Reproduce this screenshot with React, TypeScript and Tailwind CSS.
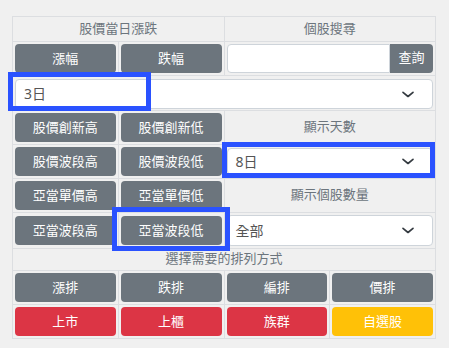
import React from 'react';

const font = { fontFamily: '"Noto Sans", "Noto Sans CJK TC", sans-serif' };

const Btn: React.FC<{ label: string; color?: string }> = ({ label, color = 'bg-[#6c757d]' }) => (
  <button className={`w-full h-[29px] rounded-[4px] ${color} text-white text-[13px] leading-[29px]`}>
    {label}
  </button>
);

const Chevron = () => (
  <svg width="14" height="10" viewBox="0 0 16 12" className="shrink-0">
    <path d="M2 4l6 5 6-5" fill="none" stroke="#343a40" strokeWidth="2" strokeLinecap="round" strokeLinejoin="round" />
  </svg>
);

const Select: React.FC<{ value: string; h?: string }> = ({ value, h = 'h-[31px]' }) => (
  <div className={`flex items-center justify-between ${h} bg-white border border-[#ced4da] rounded-[4px] pl-[8px] pr-[17px] text-[14px] text-[#555]`}>
    <span>{value}</span>
    <Chevron />
  </div>
);

const td = 'border border-[#dcdee1] p-[2px] align-middle';
const label = 'border border-[#dcdee1] p-[2px] text-center text-[13px] text-[#6c757d] align-middle';

export default function App() {
  return (
    <div className="relative w-[449px] h-[348px] bg-[#f0f0f0] pt-[16px] pl-[12px]" style={font}>
      <table className="w-[424px] table-fixed border-collapse">
        <tbody>
          <tr className="h-[23px]">
            <td colSpan={2} className={label}>股價當日漲跌</td>
            <td colSpan={2} className={label}>個股搜尋</td>
          </tr>
          <tr>
            <td className={td}><Btn label="漲幅" /></td>
            <td className={td}><Btn label="跌幅" /></td>
            <td colSpan={2} className={td}>
              <div className="flex h-[29px]">
                <input className="flex-1 min-w-0 bg-white border border-[#ced4da] rounded-l-[4px] outline-none" />
                <button className="w-[43px] bg-[#6c757d] text-white text-[13px] rounded-r-[4px]">查詢</button>
              </div>
            </td>
          </tr>
          <tr>
            <td colSpan={4} className="border border-[#dcdee1] px-[2px] pt-[3px] pb-[1px]">
              <Select value="3日" h="h-[30px]" />
            </td>
          </tr>
          <tr>
            <td className={td}><Btn label="股價創新高" /></td>
            <td className={td}><Btn label="股價創新低" /></td>
            <td colSpan={2} className={label}>顯示天數</td>
          </tr>
          <tr>
            <td className={td}><Btn label="股價波段高" /></td>
            <td className={td}><Btn label="股價波段低" /></td>
            <td colSpan={2} className={td}><Select value="8日" h="h-[27px]" /></td>
          </tr>
          <tr>
            <td className={td}><Btn label="亞當單價高" /></td>
            <td className={td}><Btn label="亞當單價低" /></td>
            <td colSpan={2} className={label}>顯示個股數量</td>
          </tr>
          <tr>
            <td className={td}><Btn label="亞當波段高" /></td>
            <td className={td}><Btn label="亞當波段低" /></td>
            <td colSpan={2} className={td}><Select value="全部" h="h-[31px]" /></td>
          </tr>
          <tr className="h-[22px]">
            <td colSpan={4} className="border border-[#dcdee1] p-0 text-center text-[13px] leading-[18px] text-[#6c757d] align-top">
              選擇需要的排列方式
            </td>
          </tr>
          <tr>
            <td className={td}><Btn label="漲排" /></td>
            <td className={td}><Btn label="跌排" /></td>
            <td className={td}><Btn label="編排" /></td>
            <td className={td}><Btn label="價排" /></td>
          </tr>
          <tr>
            <td className={td}><Btn label="上市" color="bg-[#dc3545]" /></td>
            <td className={td}><Btn label="上櫃" color="bg-[#dc3545]" /></td>
            <td className={td}><Btn label="族群" color="bg-[#dc3545]" /></td>
            <td className={td}><Btn label="自選股" color="bg-[#ffc107]" /></td>
          </tr>
        </tbody>
      </table>

      {/* highlight overlays */}
      <div className="absolute left-[8px] top-[72px] w-[143px] h-[39px] border-[5px] border-[#2a52ff]" />
      <div className="absolute left-[222px] top-[142px] w-[213px] h-[36px] border-[5px] border-[#2a52ff]" />
      <div className="absolute left-[112px] top-[207px] w-[118px] h-[44px] border-[5px] border-[#2a52ff]" />
    </div>
  );
}
